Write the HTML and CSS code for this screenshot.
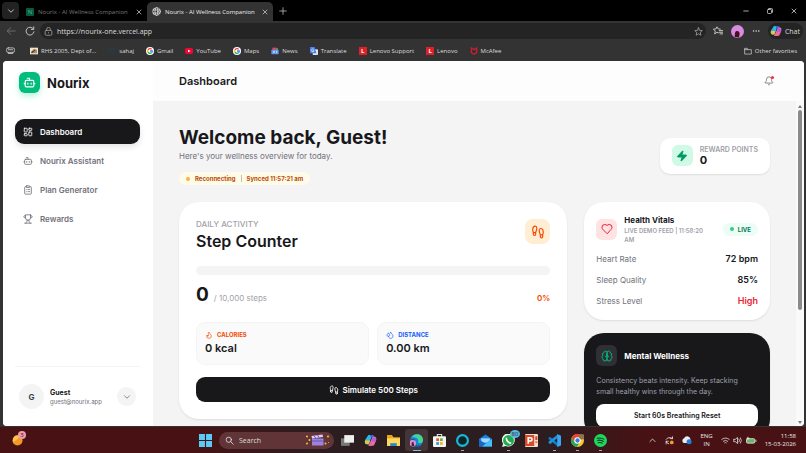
FILE: index.html
```html
<!DOCTYPE html>
<html lang="en">
<head>
    <meta charset="UTF-8">
    <meta name="viewport" content="width=device-width, initial-scale=1.0">
    <title>Nourix - AI Wellness Companion</title>
    <link rel="stylesheet" href="styles.css">
</head>
<body>
    <!-- Shared icons -->
    <svg class="sprite" aria-hidden="true">
        <symbol id="bot" viewBox="0 0 24 24"><path d="M12 8V4H8M2 14h2M20 14h2M15 13v2M9 13v2"/><rect x="4" y="8" width="16" height="12" rx="2"/></symbol>
        <symbol id="grid" viewBox="0 0 24 24"><rect x="3" y="3" width="7" height="9" rx="1"/><rect x="14" y="3" width="7" height="5" rx="1"/><rect x="14" y="12" width="7" height="9" rx="1"/><rect x="3" y="16" width="7" height="5" rx="1"/></symbol>
        <symbol id="clipboard" viewBox="0 0 24 24"><rect x="8" y="2" width="8" height="4" rx="1"/><path d="M16 4h2a2 2 0 0 1 2 2v14a2 2 0 0 1-2 2H6a2 2 0 0 1-2-2V6a2 2 0 0 1 2-2h2M12 11h4M12 16h4M8 11h.01M8 16h.01"/></symbol>
        <symbol id="trophy" viewBox="0 0 24 24"><path d="M6 9H4.5a2.5 2.5 0 0 1 0-5H6M18 9h1.5a2.5 2.5 0 0 0 0-5H18M4 22h16M10 14.66V17c0 .55-.47.98-.97 1.21C7.85 18.75 7 20.24 7 22M14 14.66V17c0 .55.47.98.97 1.21C16.15 18.75 17 20.24 17 22M18 2H6v7a6 6 0 0 0 12 0V2Z"/></symbol>
        <symbol id="footprints" viewBox="0 0 24 24"><path d="M4 16v-2.38C4 11.5 2.97 10.5 3 8c.03-2.72 1.49-6 4.5-6C9.37 2 10 3.8 10 5.5c0 3.11-2 5.66-2 8.68V16a2 2 0 1 1-4 0ZM20 20v-2.38c0-2.12 1.03-3.12 1-5.62-.03-2.72-1.49-6-4.5-6C14.63 6 14 7.8 14 9.5c0 3.11 2 5.66 2 8.68V20a2 2 0 1 0 4 0ZM16 17h4M4 13h4"/></symbol>
        <symbol id="flame" viewBox="0 0 24 24"><path d="M8.5 14.5A2.5 2.5 0 0 0 11 12c0-1.38-.5-2-1-3-1.072-2.143-.224-4.054 2-6 .5 2.5 2 4.9 4 6.5 2 1.6 3 3.5 3 5.5a7 7 0 1 1-14 0c0-1.153.433-2.294 1-3a2.5 2.5 0 0 0 2.5 2.5z"/></symbol>
        <symbol id="droplets" viewBox="0 0 24 24"><path d="M7 16.3c2.2 0 4-1.83 4-4.05 0-1.16-.57-2.26-1.71-3.19S7.29 6.75 7 5.3c-.29 1.45-1.14 2.84-2.29 3.76S3 11.1 3 12.25c0 2.22 1.8 4.05 4 4.05zM12.56 6.6A10.97 10.97 0 0 0 14 3.02c.5 2.5 2 4.9 4 6.5s3 3.5 3 5.5a6.98 6.98 0 0 1-11.91 4.97"/></symbol>
        <symbol id="zap" viewBox="0 0 24 24"><path fill="currentColor" d="M4 14a1 1 0 0 1-.78-1.63l9.9-10.2a.5.5 0 0 1 .86.46l-1.92 6.02A1 1 0 0 0 13 10h7a1 1 0 0 1 .78 1.63l-9.9 10.2a.5.5 0 0 1-.86-.46l1.92-6.02A1 1 0 0 0 11 14z"/></symbol>
        <symbol id="heart" viewBox="0 0 24 24"><path d="M19 14c1.49-1.46 3-3.21 3-5.5A5.5 5.5 0 0 0 16.5 3c-1.76 0-3 .5-4.5 2-1.5-1.5-2.74-2-4.5-2A5.5 5.5 0 0 0 2 8.5c0 2.3 1.5 4.05 3 5.5l7 7Z"/></symbol>
        <symbol id="bell" viewBox="0 0 24 24"><path d="M10.3 21a2 2 0 0 0 3.4 0M3.3 15.3A1 1 0 0 0 4 17h16a1 1 0 0 0 .74-1.67C19.4 13.95 18 12.5 18 8A6 6 0 0 0 6 8c0 4.5-1.41 5.95-2.7 7.3"/></symbol>
        <symbol id="brain" viewBox="0 0 24 24"><path d="M12 5a3 3 0 1 0-6 .13 4 4 0 0 0-2.5 5.77 4 4 0 0 0 .55 6.59A4 4 0 1 0 12 18ZM12 5a3 3 0 1 1 6 .13 4 4 0 0 1 2.5 5.77 4 4 0 0 1-.55 6.59A4 4 0 1 1 12 18ZM15 13a4.5 4.5 0 0 1-3-4 4.5 4.5 0 0 1-3 4"/></symbol>
        <symbol id="down" viewBox="0 0 24 24"><path d="m6 9 6 6 6-6"/></symbol>
        <symbol id="up" viewBox="0 0 24 24"><path d="m5 15 7-7 7 7"/></symbol>
        <symbol id="close" viewBox="0 0 24 24"><path d="M4 4l16 16M20 4 4 20"/></symbol>
        <symbol id="plus" viewBox="0 0 24 24"><path d="M12 2v20M2 12h20"/></symbol>
        <symbol id="star" viewBox="0 0 24 24"><path d="m12 2 3 7 7 .6-5.3 4.8L18.3 22 12 18l-6.3 4 1.6-7.6L2 9.6 9 9z"/></symbol>
        <symbol id="google" viewBox="0 0 24 24"><circle cx="12" cy="12" r="12" fill="#fff" stroke="none"/><g fill="none" stroke-width="4"><path stroke="#ea4335" d="M6 8.5A7 7 0 0 1 17 7"/><path stroke="#fbbc05" d="M6 8.5a7 7 0 0 0 0 7"/><path stroke="#34a853" d="M6 15.5a7 7 0 0 0 10.5 2"/><path stroke="#4285f4" d="M16.5 17.5A7 7 0 0 0 19 12h-7"/></g></symbol>
        <symbol id="copilot" viewBox="0 0 24 24"><g stroke="none"><path fill="#28b8ee" d="M8 2h7L9 19H6c-5 0-5-4-4-8z"/><path fill="#e4c92e" d="M2 12h9l-2 7H6c-4 0-5-3-4-7z"/><path fill="#3268d8" d="M11 2h5c3 0 3 3 4 5h-7z"/><path fill="#ef6aa3" d="M16 5h3c5 0 4 5 3 8l-3 7c-1 2-4 2-7 2H8z"/><path fill="#b35be2" d="m16 7 5 0c2 2 1 5 0 7h-7z"/></g></symbol>
    </svg>

    <header class="browser">
        <div class="tabstrip">
            <button class="tab-menu" aria-label="Tab actions"><svg class="icon"><use href="#down"/></svg></button>
            <div class="tab">
                <span class="favicon">N</span>
                <span class="tab-title">Nourix - AI Wellness Companion</span>
                <button aria-label="Close tab"><svg class="icon tiny"><use href="#close"/></svg></button>
            </div>
            <div class="tab active">
                <svg class="icon globe" viewBox="0 0 24 24"><circle cx="12" cy="12" r="10"/><ellipse cx="12" cy="12" rx="4" ry="10"/><path d="M3 8h18M3 16h18"/></svg>
                <span class="tab-title">Nourix - AI Wellness Companion</span>
                <button aria-label="Close tab"><svg class="icon tiny"><use href="#close"/></svg></button>
            </div>
            <button class="new-tab" aria-label="New tab"><svg class="icon"><use href="#plus"/></svg></button>
            <div class="window-buttons">
                <button aria-label="Minimize"><svg class="icon tiny" viewBox="0 0 24 24"><path d="M3 12h18"/></svg></button>
                <button aria-label="Restore"><svg class="icon tiny" viewBox="0 0 24 24"><rect x="2" y="6" width="16" height="16" rx="3"/><path d="M7 2h11a4 4 0 0 1 4 4v11"/></svg></button>
                <button aria-label="Close"><svg class="icon tiny"><use href="#close"/></svg></button>
            </div>
        </div>

        <div class="toolbar">
            <button class="muted" aria-label="Back"><svg class="icon" viewBox="0 0 24 24"><path d="M22 12H3m8-8-8 8 8 8"/></svg></button>
            <button aria-label="Reload"><svg class="icon" viewBox="0 0 24 24"><path d="M20 7a9.5 9.5 0 1 0 1.5 7M21 2v6h-6"/></svg></button>
            <div class="address">
                <svg class="icon" viewBox="0 0 24 24"><rect x="3" y="9" width="18" height="13" rx="3"/><path d="M7 9V6a5 5 0 0 1 10 0v3M12 15v1"/></svg>
                <input type="text" aria-label="Address" value="https://nourix-one.vercel.app">
                <svg class="icon"><use href="#star"/></svg>
            </div>
            <div class="tools">
                <button aria-label="Favorites"><svg class="icon" viewBox="0 0 24 24"><path d="M13 16.5 9.5 15 4 19l1.5-7L1 7.5l6-.6L9.5 2l3 5 5 .5M15 11h8M15 15h8M17 19h6"/></svg></button>
                <button class="profile" aria-label="Profile"><svg viewBox="0 0 24 24"><circle cx="12" cy="12" r="12" fill="#d98be0"/><path fill="#43111f" d="M7 22c0-4 0-7 1-9s5-3 7 0 0 7 0 10z"/></svg></button>
                <button aria-label="More"><svg class="icon dots" viewBox="0 0 24 24"><circle cx="4" cy="12" r="1"/><circle cx="12" cy="12" r="1"/><circle cx="20" cy="12" r="1"/></svg></button>
                <button class="chat"><svg class="app"><use href="#copilot"/></svg>Chat</button>
            </div>
        </div>

        <nav class="bookmarks" aria-label="Favorites bar">
            <svg class="icon pass" viewBox="0 0 24 24"><rect x="1" y="5" width="22" height="12" rx="5"/><path d="M6 10h12M6 17v3h12v-3"/></svg>
            <a href="#"><svg viewBox="0 0 24 24"><path fill="#eee6d7" d="M0 2h24v20H0z"/><path fill="#b58c58" d="M3 14 12 5l9 3v11H3z"/><path fill="#333" d="m3 16 12-8v3L7 18z"/></svg>RHS 2005, Dept of...</a>
            <a href="#"><svg viewBox="0 0 24 24"><path fill="none" stroke="#24404a" stroke-width="3" d="M5 5h14v14H5z"/></svg>sahaj</a>
            <a href="#"><svg><use href="#google"/></svg>Gmail</a>
            <a href="#"><svg viewBox="0 0 24 24"><rect y="3" width="24" height="18" rx="5" fill="#f00633"/><path fill="#fff" d="m9 8 8 4-8 4z"/></svg>YouTube</a>
            <a href="#"><svg><use href="#google"/></svg>Maps</a>
            <a href="#"><svg viewBox="0 0 24 24"><path fill="#d44a50" d="M4 2h13v8H4z"/><path fill="#42a56e" d="M15 4h6v8h-6z"/><rect x="1" y="8" width="22" height="14" rx="2" fill="#5c91ef"/><path stroke="#fff" stroke-width="2" d="M6 13h6M6 17h5M15 13h4M15 17h4"/></svg>News</a>
            <a href="#"><svg viewBox="0 0 24 24"><rect x="8" y="7" width="16" height="17" rx="2" fill="#dce3ed"/><path fill="#4c80e9" d="M0 0h14l5 19H2q-2 0-2-2z"/><path fill="none" stroke="#fff" stroke-width="2" d="M11 7a4 4 0 1 0 1 4H8"/></svg>Translate</a>
            <a href="#"><span class="letter">L</span>Lenovo Support</a>
            <a href="#"><span class="letter">L</span>Lenovo</a>
            <a href="#"><svg viewBox="0 0 24 24"><path fill="none" stroke="#c5202c" stroke-width="4" d="M4 3v14l8 5 8-5V3l-8 5z"/></svg>McAfee</a>
            <a href="#" class="other"><svg class="icon" viewBox="0 0 24 24"><path d="M2 20V4h8l2 4h10v12zM2 8h9"/></svg>Other favorites</a>
        </nav>
    </header>

    <div class="viewport">
        <aside class="sidebar">
            <div class="brand">
                <span class="brand-logo"><svg class="icon"><use href="#bot"/></svg></span>
                Nourix
            </div>
            <nav class="menu">
                <a href="#" class="active"><svg class="icon"><use href="#grid"/></svg>Dashboard</a>
                <a href="#"><svg class="icon"><use href="#bot"/></svg>Nourix Assistant</a>
                <a href="#"><svg class="icon"><use href="#clipboard"/></svg>Plan Generator</a>
                <a href="#"><svg class="icon"><use href="#trophy"/></svg>Rewards</a>
            </nav>
            <div class="account">
                <span class="avatar">G</span>
                <div class="account-info">
                    <strong>Guest</strong>
                    <span>guest@nourix.app</span>
                </div>
                <button aria-label="Account menu"><svg class="icon"><use href="#down"/></svg></button>
            </div>
        </aside>

        <div class="page">
            <div class="topbar">
                <h2>Dashboard</h2>
                <button class="bell" aria-label="Notifications"><svg class="icon"><use href="#bell"/></svg></button>
            </div>

            <div class="scroller">
                <main>
                    <section class="welcome">
                        <div>
                            <h1>Welcome back, Guest!</h1>
                            <p>Here's your wellness overview for today.</p>
                            <div class="sync"><i class="dot"></i>Reconnecting<span class="divider"></span>Synced 11:57:21 am</div>
                        </div>
                        <div class="points">
                            <span class="tile green"><svg class="icon"><use href="#zap"/></svg></span>
                            <div>
                                <small>REWARD POINTS</small>
                                <strong>0</strong>
                            </div>
                        </div>
                    </section>

                    <div class="cards">
                        <section class="card steps">
                            <div class="steps-head">
                                <div>
                                    <span class="eyebrow">DAILY ACTIVITY</span>
                                    <h2>Step Counter</h2>
                                </div>
                                <span class="tile orange"><svg class="icon"><use href="#footprints"/></svg></span>
                            </div>
                            <div class="progress"></div>
                            <div class="count">
                                <strong>0</strong>
                                <span>/ 10,000 steps</span>
                                <em>0%</em>
                            </div>
                            <div class="stats">
                                <div class="stat calories">
                                    <small><svg class="icon"><use href="#flame"/></svg>CALORIES</small>
                                    <strong>0 kcal</strong>
                                </div>
                                <div class="stat distance">
                                    <small><svg class="icon"><use href="#droplets"/></svg>DISTANCE</small>
                                    <strong>0.00 km</strong>
                                </div>
                            </div>
                            <button class="simulate"><svg class="icon"><use href="#footprints"/></svg>Simulate 500 Steps</button>
                        </section>

                        <div class="side">
                            <section class="card vitals">
                                <div class="card-head">
                                    <span class="tile red"><svg class="icon"><use href="#heart"/></svg></span>
                                    <div class="vitals-title">
                                        <h3>Health Vitals</h3>
                                        <small>LIVE DEMO FEED | 11:58:20 AM</small>
                                    </div>
                                    <span class="live"><i class="dot"></i>LIVE</span>
                                </div>
                                <dl>
                                    <div><dt>Heart Rate</dt><dd>72 bpm</dd></div>
                                    <div><dt>Sleep Quality</dt><dd>85%</dd></div>
                                    <div><dt>Stress Level</dt><dd class="high">High</dd></div>
                                </dl>
                            </section>
                            <section class="card mental">
                                <div class="card-head">
                                    <span class="tile dark"><svg class="icon"><use href="#brain"/></svg></span>
                                    <h3>Mental Wellness</h3>
                                </div>
                                <p>Consistency beats intensity. Keep stacking small healthy wins through the day.</p>
                                <button>Start 60s Breathing Reset</button>
                            </section>
                        </div>
                    </div>
                </main>
                <div class="scrollbar" aria-hidden="true"><i class="arrow-up"></i><span></span><i class="arrow-down"></i></div>
            </div>
        </div>
    </div>

    <footer class="taskbar">
        <button class="widgets" aria-label="Widgets">
            <svg viewBox="0 0 24 24"><circle cx="12" cy="12" r="11" fill="#f39a24"/><path fill="#ffc455" d="M3 6a11 11 0 0 1 14-4C13 10 8 12 2 15z"/></svg>
            <span class="badge">3</span>
        </button>
        <div class="apps">
            <button aria-label="Start"><svg viewBox="0 0 24 24"><path fill="#5acaf6" d="M0 0h11v11H0zM13 0h11v11H13zM0 13h11v11H0zM13 13h11v11H13z"/></svg></button>
            <div class="search">
                <svg class="icon" viewBox="0 0 24 24"><circle cx="10" cy="10" r="7"/><path d="m15 15 7 7"/></svg>
                <input type="text" placeholder="Search" aria-label="Search">
                <svg class="clapper" viewBox="0 0 50 24"><g fill="#f1c83c"><circle cx="4" cy="5" r="2"/><circle cx="9" cy="12" r="2"/><circle cx="4" cy="19" r="2"/><circle cx="46" cy="5" r="2"/><circle cx="41" cy="19" r="2"/><circle cx="47" cy="17" r="1"/></g><path fill="#9c83df" d="M14 9h23v14H14z"/><path fill="#d8cdf6" d="m13 4 22-3 1 5-22 3z"/><path stroke="#6f55b4" stroke-width="2" d="m18 3 3 5M25 2l3 5M14 14h23"/></svg>
            </div>
            <button aria-label="Task view"><svg viewBox="0 0 24 24"><path fill="#777" d="M0 8h16v14H0z"/><path fill="#eee" d="M6 2h18v14H6z"/></svg></button>
            <button aria-label="Copilot"><svg><use href="#copilot"/></svg></button>
            <button aria-label="File Explorer"><svg viewBox="0 0 24 24"><path fill="#e5a51d" d="M0 2h9l3 4h12v16H0z"/><path fill="#ffd75d" d="M0 8h24v14H0z"/><path fill="#2384d8" d="M6 17h12v5H6z"/></svg></button>
            <button class="current" aria-label="Edge"><svg viewBox="0 0 24 24"><circle cx="12" cy="12" r="12" fill="#1685d4"/><path fill="#45d492" d="M3 6C9-4 25 0 24 12c0 5-7 6-9 3 2-8-6-9-12-9z"/><path fill="#155aa7" d="M9 10c-4 7 2 13 11 11-9 8-21-1-19-10 2-3 6-3 8-1z"/><circle cx="5" cy="17" r="6" fill="#e68ed8"/><path fill="#551b36" d="M3 22v-6l3-2 2 8z"/></svg></button>
            <button aria-label="Store"><svg viewBox="0 0 24 24"><path fill="none" stroke="#ddd" stroke-width="2" d="M8 6V1h8v5"/><rect y="4" width="24" height="20" rx="2" fill="#f5f5f5"/><path fill="#e34f32" d="M6 8h5v5H6z"/><path fill="#73ad25" d="M13 8h5v5h-5z"/><path fill="#2895dc" d="M6 15h5v5H6z"/><path fill="#eeb51b" d="M13 15h5v5h-5z"/></svg></button>
            <button class="open" aria-label="Alexa"><svg viewBox="0 0 24 24"><circle cx="12" cy="12" r="10" fill="#102329" stroke="#16bad7" stroke-width="4"/><path fill="#16bad7" d="M9 20h5l-3 4z"/></svg></button>
            <button aria-label="Outlook"><svg viewBox="0 0 24 24"><path fill="#1682dc" d="m0 9 12-8 12 8v14H0z"/><path fill="#9ed6ff" d="M4 8h16v8H4z"/><path fill="#1c65c7" d="m0 10 12 8L24 9v14H0z"/><path fill="#42c1f6" d="m12 18 12-9v14H6z"/></svg></button>
            <button class="open" aria-label="WhatsApp"><svg viewBox="0 0 24 24"><path fill="#e6f5e8" d="m0 24 2-6a12 12 0 1 1 5 4z"/><circle cx="12" cy="12" r="10" fill="#25a94e"/><path fill="none" stroke="#fff" stroke-width="3" d="M8 7c0 6 3 9 9 10"/></svg><span class="badge blue">80</span></button>
            <button aria-label="PowerPoint"><svg viewBox="0 0 24 24"><rect width="24" height="24" rx="2" fill="#f3ddd2"/><path fill="#d64b26" d="M0 2h17v20H0zM19 4h4v7h-4zM19 14h4v2h-4z"/><path fill="none" stroke="#fff" stroke-width="3" d="M6 18V7h4a3 3 0 0 1 0 6H6"/></svg></button>
            <button class="open" aria-label="VS Code"><svg viewBox="0 0 24 24"><path fill="#167bc3" d="m1 7 3-2 14 12v6L1 9z"/><path fill="#1f8fda" d="m1 16 3 3L18 7V1L1 14z"/><path fill="#37a8f5" d="m17 0 7 3v18l-7 3z"/></svg></button>
            <button class="open" aria-label="Chrome"><svg viewBox="0 0 24 24"><circle cx="12" cy="12" r="12" fill="#f5c927"/><path fill="#e44737" d="M1 7a12 12 0 0 1 22 0H12l-5 8z"/><path fill="#2ea35a" d="M1 7l7 9 8-1-5 9A12 12 0 0 1 1 7z"/><circle cx="12" cy="12" r="6" fill="#fff"/><circle cx="12" cy="12" r="4" fill="#3b78e7"/><circle cx="20" cy="5" r="5" fill="#8b7556"/></svg></button>
            <button class="open" aria-label="Spotify"><svg viewBox="0 0 24 24"><circle cx="12" cy="12" r="12" fill="#1ed760"/><path fill="none" stroke="#15351f" stroke-width="2" d="M5 8q8-2 14 2M6 12q6-2 12 2M7 16q5-1 9 1"/></svg></button>
        </div>
        <div class="tray">
            <svg class="icon"><use href="#up"/></svg>
            <svg class="icon update" viewBox="0 0 24 24"><path d="M3 9a10 8 0 0 1 17-2v-5M20 7h-6M3 14a9 8 0 0 0 7 7M3 21v-7h6"/><circle cx="18" cy="17" r="5" fill="#f59b22" stroke="none"/></svg>
            <svg class="app" viewBox="0 0 24 24"><path fill="#e8edf3" d="M4 19a6 6 0 0 1 1-11 8 8 0 0 1 15 1l1 10z"/><circle cx="17" cy="16" r="6" fill="#2380d6"/></svg>
            <span class="lang">ENG<br>IN</span>
            <div class="status">
                <svg class="icon" viewBox="0 0 24 24"><path d="M2 9a15 15 0 0 1 20 0M6 14a9 9 0 0 1 12 0M10 18a3 3 0 0 1 4 0"/></svg>
                <svg class="icon" viewBox="0 0 24 24"><path d="M2 9v6h4l6 5V4L6 9zM16 8q3 4 0 8M20 5q5 7 0 14"/></svg>
                <svg class="icon battery" viewBox="0 0 30 24"><rect x="3" y="7" width="22" height="12" rx="3" fill="#69b466"/><path d="M28 11v4M7 3v7M4 6h6"/></svg>
            </div>
            <time>11:58<br>15-03-2026</time>
        </div>
    </footer>
</body>
</html>
```
FILE: styles.css
```css
* {
    box-sizing: border-box;
}

body {
    margin: 0;
    height: 100vh;
    display: flex;
    flex-direction: column;
    overflow: hidden;
    background: #333;
    color: #18181b;
    font-family: Inter, sans-serif;
    font-size: 8px;
}

h1, h2, h3, p, dl, dd {
    margin: 0;
}

button, input {
    border: none;
    padding: 0;
    background: none;
    color: inherit;
    font: inherit;
}

a {
    color: inherit;
    text-decoration: none;
}

svg {
    display: block;
    flex-shrink: 0;
}

.sprite {
    position: absolute;
    width: 0;
    height: 0;
}

.icon {
    width: 10px;
    height: 10px;
    fill: none;
    stroke: currentColor;
    stroke-width: 2;
    stroke-linecap: round;
    stroke-linejoin: round;
}

.icon.tiny {
    width: 6px;
    height: 6px;
    stroke-width: 3;
}

/* Browser */
.browser {
    flex-shrink: 0;
    color: #ddd;
    font-family: "Open Sans", sans-serif;
    font-size: 6px;
}

.tabstrip {
    display: flex;
    align-items: center;
    height: 21px;
    padding-left: 2px;
    background: #000;
}

.tab-menu {
    display: grid;
    place-items: center;
    width: 17px;
    height: 17px;
    margin-right: 2px;
    border-radius: 4px;
    background: #222;
}

.tab {
    display: flex;
    align-items: center;
    gap: 4px;
    width: 126px;
    height: 19px;
    padding: 0 5px;
    align-self: flex-end;
    color: #777;
}

.tab button {
    margin-left: auto;
    color: #ccc;
}

.tab.active {
    border-radius: 5px 5px 0 0;
    background: #333;
    color: #eee;
}

.tab-title {
    white-space: nowrap;
}

.favicon {
    width: 8px;
    height: 8px;
    border-radius: 1px;
    background: #075b40;
    color: #51b38d;
    line-height: 8px;
    text-align: center;
}

.globe {
    width: 9px;
    height: 9px;
}

.new-tab {
    margin-left: 6px;
}

.new-tab .icon {
    width: 8px;
    height: 8px;
}

.window-buttons {
    display: flex;
    gap: 18px;
    margin-left: auto;
    padding-right: 9px;
}

.toolbar {
    display: flex;
    align-items: center;
    gap: 9px;
    height: 20px;
    padding: 0 3px 0 6px;
    background: #333;
}

.toolbar .muted {
    color: #777;
}

.address {
    flex: 1;
    display: flex;
    align-items: center;
    gap: 4px;
    height: 16px;
    margin-left: -4px;
    padding: 0 3px 0 4px;
    border-radius: 8px;
    background: #242424;
    color: #aaa;
}

.address input {
    flex: 1;
    color: #ddd;
    font-size: 7px;
}

.address .icon {
    width: 9px;
    height: 9px;
}

.tools {
    display: flex;
    align-items: center;
    gap: 8px;
    margin-left: -2px;
}

.profile svg {
    width: 13px;
    height: 13px;
}

.app {
    width: 10px;
    height: 10px;
}

.dots {
    width: 8px;
    height: 8px;
}

.chat {
    display: flex;
    align-items: center;
    gap: 3px;
    height: 16px;
    padding: 0 3px 0 2px;
    border-radius: 8px;
    background: #242424;
    font-size: 7px;
}

.chat .app {
    width: 12px;
    height: 12px;
}

.bookmarks {
    display: flex;
    align-items: center;
    gap: 12px;
    height: 19px;
    padding: 0 9px 0 6px;
    background: #333;
    white-space: nowrap;
}

.bookmarks a {
    display: flex;
    align-items: center;
    gap: 3px;
}

.bookmarks a svg,
.letter {
    width: 8px;
    height: 8px;
}

.bookmarks .pass {
    width: 9px;
    height: 9px;
    margin-right: 3px;
}

.letter {
    background: #df2127;
    color: #fff;
    font-weight: 700;
    line-height: 8px;
    text-align: center;
}

.bookmarks .other {
    margin-left: auto;
}

/* App shell */
.viewport {
    flex: 1;
    display: flex;
    min-height: 0;
    margin: 1px 2px 1px 3px;
    border-radius: 4px;
    overflow: hidden;
    background: #f4f4f5;
}

.sidebar {
    width: 150px;
    display: flex;
    flex-direction: column;
    flex-shrink: 0;
    padding: 0 13px 0 12px;
    background: #fff;
}

.brand {
    display: flex;
    align-items: center;
    gap: 7px;
    padding: 11px 4px 26px;
    font-size: 13px;
    font-weight: 700;
}

.brand-logo {
    display: grid;
    place-items: center;
    width: 21px;
    height: 21px;
    border-radius: 6px;
    background: #00bc7d;
    color: #fff;
    box-shadow: 0 3px 6px #b6f2dc;
}

.brand-logo .icon {
    width: 13px;
    height: 13px;
}

.menu {
    display: grid;
    gap: 4px;
}

.menu a {
    display: flex;
    align-items: center;
    gap: 7px;
    height: 25px;
    padding: 0 8px;
    border-radius: 9px;
    color: #71717b;
    font-weight: 600;
}

.menu a.active {
    background: #18181b;
    color: #fff;
    box-shadow: 0 3px 6px #e4e4e7;
}

.account {
    display: flex;
    align-items: center;
    gap: 6px;
    margin-top: auto;
    padding: 17px 4px;
    border-top: 1px solid #f4f4f5;
}

.avatar {
    display: grid;
    place-items: center;
    width: 25px;
    height: 25px;
    border-radius: 50%;
    background: #f4f4f5;
    color: #3f3f46;
    font-weight: 700;
}

.account-info {
    flex: 1;
    display: grid;
    line-height: 9px;
    font-size: 6px;
    color: #71717b;
}

.account-info strong {
    color: #18181b;
    font-size: 7px;
}

.account button {
    display: grid;
    place-items: center;
    width: 19px;
    height: 19px;
    border-radius: 50%;
    background: #f4f4f5;
    color: #71717b;
}

.page {
    flex: 1;
    display: flex;
    flex-direction: column;
    min-width: 0;
}

.topbar {
    display: flex;
    align-items: center;
    justify-content: space-between;
    flex-shrink: 0;
    height: 40px;
    padding: 0 30px 0 26px;
    background: #fdfdfd;
}

.topbar h2 {
    font-size: 11px;
    font-weight: 600;
}

.bell {
    position: relative;
    color: #71717b;
}

.bell::after {
    content: "";
    position: absolute;
    top: 0;
    right: 0;
    width: 3px;
    height: 3px;
    border-radius: 50%;
    background: #fb2c36;
}

.scroller {
    flex: 1;
    display: flex;
    min-height: 0;
}

main {
    flex: 1;
    min-width: 0;
    padding: 25px 26px;
}

.scrollbar {
    display: flex;
    flex-direction: column;
    align-items: center;
    gap: 2px;
    width: 8px;
    padding: 4px 0 2px;
    background: #fafafa;
}

.scrollbar span {
    width: 4px;
    height: 200px;
    border-radius: 2px;
    background: #8a8a8a;
}

.arrow-up, .arrow-down {
    border: 2px solid transparent;
}

.arrow-up {
    border-top: none;
    border-bottom: 3px solid #777;
}

.arrow-down {
    margin-top: auto;
    border-bottom: none;
    border-top: 3px solid #777;
}

.welcome {
    display: flex;
    align-items: center;
    justify-content: space-between;
    margin-bottom: 17px;
}

.welcome h1 {
    font-size: 19px;
    font-weight: 700;
    line-height: 24px;
}

.welcome p {
    color: #71717b;
    line-height: 12px;
}

.dot {
    width: 4px;
    height: 4px;
    border-radius: 50%;
    background: currentColor;
}

.sync {
    display: flex;
    align-items: center;
    width: max-content;
    height: 13px;
    margin-top: 10px;
    padding: 0 7px;
    border-radius: 7px;
    background: #fffbeb;
    color: #bb4d00;
    font-size: 6px;
    font-weight: 700;
}

.sync .dot {
    margin-right: 5px;
    background: #ffb13b;
}

.divider {
    width: 1px;
    height: 7px;
    margin: 0 5px;
    background: #d6b9a4;
}

.points {
    display: flex;
    align-items: center;
    gap: 7px;
    height: 36px;
    padding: 0 12px;
    border-radius: 10px;
    background: #fff;
    box-shadow: 0 1px 2px #ddd;
}

.points small {
    display: block;
    color: #9f9fa9;
    font-size: 7px;
    font-weight: 600;
    line-height: 9px;
}

.points strong {
    display: block;
    font-size: 11px;
    line-height: 13px;
}

.tile {
    display: grid;
    place-items: center;
    flex-shrink: 0;
    width: 21px;
    height: 21px;
    border-radius: 6px;
}

.tile .icon {
    width: 12px;
    height: 12px;
}

.tile.green {
    background: #d0fae5;
    color: #009966;
}

.tile.orange {
    width: 25px;
    height: 25px;
    border-radius: 8px;
    background: #ffedd4;
    color: #f54900;
}

.tile.orange .icon {
    width: 14px;
    height: 14px;
}

.tile.red {
    background: #ffe2e2;
    color: #e7203b;
}

.tile.dark {
    background: #302f33;
    color: #00bc7d;
}

.cards {
    display: grid;
    grid-template-columns: repeat(3, 1fr);
    align-items: start;
    gap: 17px;
}

.card {
    border-radius: 20px;
    background: #fff;
    box-shadow: 0 1px 2px #ddd;
}

.steps {
    grid-column: span 2;
    padding: 17px;
}

.steps-head {
    display: flex;
    justify-content: space-between;
    margin-bottom: 13px;
}

.eyebrow {
    display: block;
    color: #9f9fa9;
    font-weight: 500;
    line-height: 10px;
}

.steps-head h2 {
    font-size: 16px;
    font-weight: 600;
    line-height: 24px;
}

.progress {
    height: 9px;
    border-radius: 5px;
    background: #f4f4f5;
}

.count {
    display: flex;
    align-items: baseline;
    gap: 5px;
    margin: 8px 0 12px;
    color: #9f9fa9;
    line-height: 24px;
}

.count strong {
    color: #18181b;
    font-size: 19px;
}

.count em {
    margin-left: auto;
    color: #f54900;
    font-style: normal;
    font-weight: 600;
}

.stats {
    display: grid;
    grid-template-columns: 1fr 1fr;
    gap: 8px;
    margin-bottom: 12px;
}

.stat {
    height: 43px;
    padding: 7px 8px;
    border: 1px solid #f4f4f5;
    border-radius: 9px;
    background: #fafafa;
}

.stat small {
    display: flex;
    align-items: center;
    gap: 4px;
    font-size: 6px;
    font-weight: 700;
    line-height: 10px;
}

.stat .icon {
    width: 8px;
    height: 8px;
}

.stat strong {
    display: block;
    font-size: 11px;
    font-weight: 600;
    line-height: 16px;
}

.calories small {
    color: #f54900;
}

.distance small {
    color: #155dfc;
}

.simulate {
    display: flex;
    align-items: center;
    justify-content: center;
    gap: 4px;
    width: 100%;
    height: 25px;
    border-radius: 9px;
    background: #18181b;
    color: #fff;
    font-weight: 600;
}

.side {
    display: grid;
    gap: 13px;
}

.side .card {
    padding: 12px;
}

.card-head {
    display: flex;
    align-items: center;
    gap: 7px;
}

.card-head h3 {
    font-size: 8px;
    font-weight: 700;
    line-height: 12px;
}

.vitals-title {
    flex: 1;
    padding-right: 5px;
}

.vitals-title small {
    display: block;
    color: #9f9fa9;
    font-size: 6px;
    font-weight: 600;
    line-height: 9px;
}

.live {
    display: flex;
    align-items: center;
    gap: 4px;
    height: 13px;
    padding: 0 7px;
    border-radius: 7px;
    background: #ecfdf5;
    color: #007a55;
    font-size: 6px;
    font-weight: 700;
}

.live .dot {
    background: #34c98e;
}

.vitals dl {
    display: grid;
    gap: 9px;
    margin: 9px 0 1px;
    line-height: 12px;
}

.vitals dl div {
    display: flex;
    justify-content: space-between;
}

.vitals dt {
    color: #71717b;
}

.vitals dd {
    font-size: 9px;
    font-weight: 600;
}

.vitals .high {
    color: #ec2230;
}

.card.mental {
    background: #18181b;
    color: #fff;
}

.mental p {
    margin: 9px 0 7px;
    padding-right: 12px;
    color: #9f9fa9;
    font-size: 7px;
    line-height: 11px;
}

.mental button {
    width: 100%;
    height: 23px;
    border-radius: 8px;
    background: #fff;
    color: #18181b;
    font-size: 7px;
    font-weight: 600;
}

/* Taskbar */
.taskbar {
    display: grid;
    grid-template-columns: 1fr auto 1fr;
    align-items: center;
    flex-shrink: 0;
    height: 26px;
    background: linear-gradient(90deg, #481214 24%, #2b1d20 38%, #2b1d20 68%, #481214 80%);
    color: #eee;
    font-family: "Open Sans", sans-serif;
    font-size: 6px;
}

.widgets {
    position: relative;
    width: 11px;
    margin-left: 12px;
}

.badge {
    position: absolute;
    top: -4px;
    right: -3px;
    width: 8px;
    height: 8px;
    border-radius: 50%;
    background: #ef9ca8;
    color: #35151c;
    font-size: 6px;
    line-height: 8px;
    text-align: center;
}

.badge.blue {
    top: 1px;
    right: 0;
    width: 10px;
    background: #58bce9;
}

.apps {
    display: flex;
    align-items: center;
}

.apps button {
    position: relative;
    display: grid;
    place-items: center;
    width: 23px;
    height: 22px;
    border-radius: 3px;
}

.apps button > svg {
    width: 13px;
    height: 13px;
}

.apps .current {
    background: #443638;
}

.current::after,
.open::after {
    content: "";
    position: absolute;
    bottom: 0;
    width: 3px;
    height: 1px;
    background: #aaa;
}

.current::after {
    width: 8px;
    background: #60c6f5;
}

.search {
    display: flex;
    align-items: center;
    gap: 5px;
    width: 115px;
    height: 17px;
    margin: 0 2px;
    padding: 0 4px 0 6px;
    border-radius: 9px;
    background: #613537;
}

.search .icon {
    width: 9px;
    height: 9px;
}

.search input {
    flex: 1;
    min-width: 0;
    font-size: 7px;
}

.search input::placeholder {
    color: #ddd;
}

.clapper {
    width: 25px;
    height: 12px;
}

.tray {
    display: flex;
    align-items: center;
    justify-content: flex-end;
    gap: 8px;
    padding-right: 10px;
    line-height: 8px;
}

.tray .icon {
    width: 9px;
    height: 9px;
}

.lang {
    text-align: center;
}

.status {
    display: flex;
    gap: 3px;
}

.status .battery {
    width: 12px;
}

.tray time {
    text-align: right;
}
```
